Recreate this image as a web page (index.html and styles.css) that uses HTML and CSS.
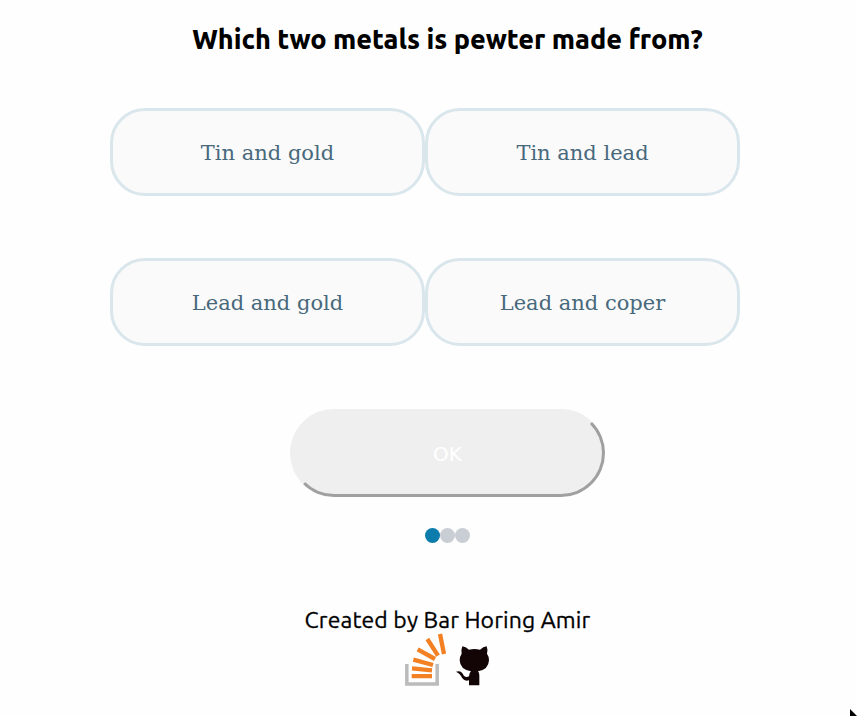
FILE: index.html
```html
<!DOCTYPE html>
<html lang="en">
<head>
<meta charset="utf-8">
<title>Quiz</title>
<link rel="stylesheet" href="styles.css">
</head>
<body>
<main class="quiz">
  <h1 class="question"><span>Which two metals is pewter made from?</span></h1>
  <div class="answers">
    <button class="answer">Tin and gold</button>
    <button class="answer">Tin and lead</button>
    <button class="answer">Lead and gold</button>
    <button class="answer">Lead and coper</button>
  </div>
  <button class="ok">OK</button>
  <div class="dots"><i class="dot active"></i><i class="dot"></i><i class="dot"></i></div>
  <footer class="footer">
    <p class="credit">Created by Bar Horing Amir</p>
    <div class="links">
      <svg class="stack" viewBox="30 24 126 159" aria-hidden="true">
        <path d="M35.5 117V177H126.500V117" fill="none" stroke="#bcbbbb" stroke-width="10.500"/>
        <path d="M50 153.500H111M51 130L111 136M55 104L114 120M68 73L120 102M97 42L129 92M135 27L147 87" fill="none" stroke="#f48024" stroke-width="13"/>
      </svg>
      <svg class="github" viewBox="180 60 105 123" aria-hidden="true">
        <path d="M202 64Q212 65 222 74Q238 70 255 74Q265 65 275 64Q279 74 276 86Q282 94 282 106Q281 134 249 139Q253 144 253 151V181H222V166Q209 170 202 160Q197 147 183 140Q193 136 201 143Q206 154 213 156Q218 157 222 154Q222 144 228 139Q195 134 194 106Q194 94 200 86Q198 74 202 64Z" fill="#130505"/>
      </svg>
    </div>
  </footer>
</main>
<svg class="pointer" viewBox="0 0 7 7" aria-hidden="true"><path d="M0 0L7 7H0Z"/></svg>
</body>
</html>
```
FILE: styles.css
```css
* { box-sizing: border-box; }
body {
  margin: 0;
  height: 716px;
  overflow: hidden;
  background: #fefefe;
  color: #000;
  font-family: Ubuntu, "Noto Sans", sans-serif;
}
.quiz {
  display: flex;
  flex-direction: column;
  align-items: center;
  padding: 19px 0 0 38px;
}
.question {
  margin: 0;
  font-size: 27px;
  line-height: 40px;
  font-weight: 800;
  letter-spacing: -0.03px;
  white-space: nowrap;
}
.answers {
  display: grid;
  grid-template-columns: 315px 315px;
  row-gap: 62px;
  margin: 49px 45px 0 0;
}
button { padding: 0; width: 315px; height: 88px; }
.answer {
  border: 3px solid #d9e6ec;
  border-radius: 35px;
  background: #fafafa;
  color: #48697c;
  font: 21px "DejaVu Serif", serif;
  padding-top: 2px;
}
.ok {
  margin-top: 63px;
  padding-top: 2px;
  border: 3px solid;
  border-color: #efefef #a0a0a0 #a0a0a0 #efefef;
  border-radius: 44px;
  background: #efefef;
  color: #fff;
  font: 20px "DejaVu Sans", sans-serif;
}
.dots { display: flex; margin-top: 31px; }
.dot {
  width: 15px;
  height: 15px;
  border-radius: 50%;
  background: #c8ced3;
}
.dot.active { background: #0c7cad; }
.footer {
  display: flex;
  flex-direction: column;
  align-items: center;
  margin-top: 63px;
}
.credit {
  margin: 0;
  font-size: 23px;
  font-weight: 400;
  letter-spacing: 0.13px;
  line-height: 28px;
  white-space: nowrap;
  -webkit-text-stroke: 0.3px #000;
}
.links { display: flex; align-items: flex-end; gap: 8px; }
.stack { width: 42px; height: 53px; margin-top: -1px; }
.github { width: 35px; height: 41px; }
.pointer {
  position: absolute;
  right: 0;
  bottom: 0;
  width: 7px;
  height: 7px;
}
```
